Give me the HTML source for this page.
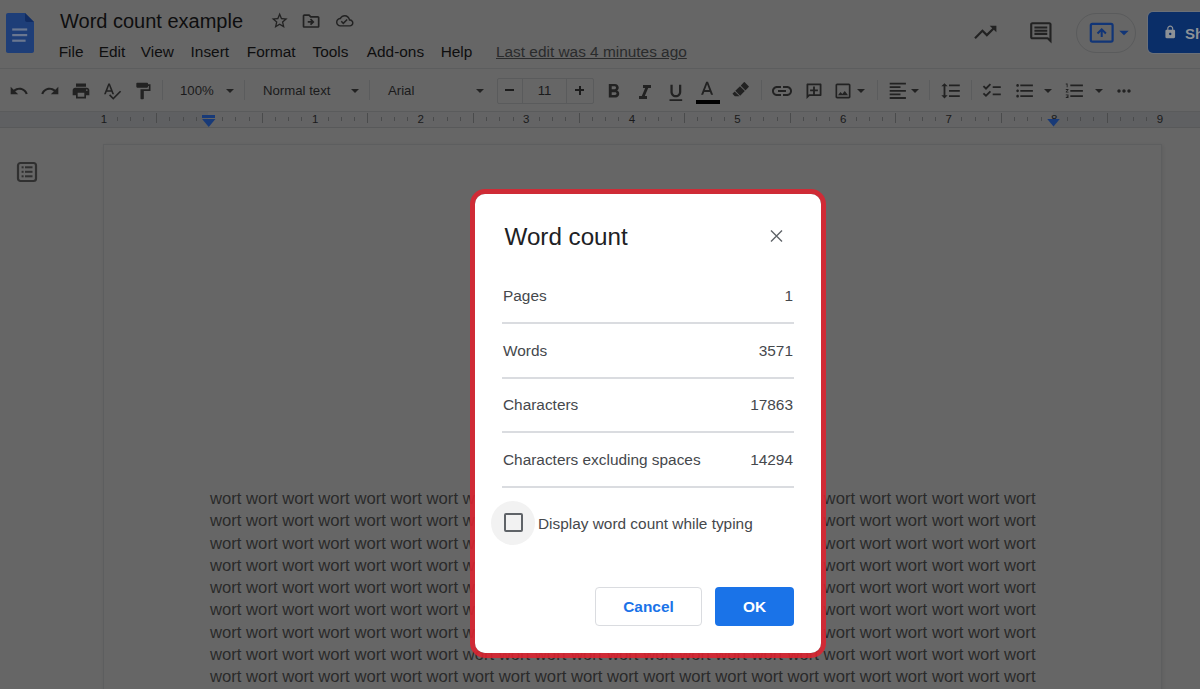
<!DOCTYPE html>
<html><head><meta charset="utf-8">
<style>
*{margin:0;padding:0;box-sizing:border-box}
html,body{width:1200px;height:689px;overflow:hidden;background:#666;font-family:"Liberation Sans",sans-serif;position:relative}
.a{position:absolute}
svg.a{overflow:visible}
#hline{left:0;top:68px;width:1200px;height:1px;background:#5c5d5e}
#ruler{left:0;top:110.5px;width:1200px;height:17.5px;background:#5f6062;border-top:1px solid #5a5b5c;border-bottom:1px solid #58595a}
#rulerw{left:208px;top:111.5px;width:845px;height:15px;background:#646465}
#page{left:104px;top:145px;width:1057px;height:600px;background:#666;box-shadow:0 0 0 1px #5d5e5f,1px 1px 3px 1px rgba(0,0,0,.08)}
.title{left:60px;top:10px;font-size:20px;color:#0e0e0f;white-space:nowrap}
.menu{top:43px;font-size:15.4px;color:#0e0e0f;white-space:nowrap}
.tb{top:82.5px;font-size:13.2px;color:#1a1a1b;white-space:nowrap}
.sep{top:80px;width:1px;height:20px;background:#5b5c5d}
.ic path{fill:#222}
.rn{top:112px;width:20px;text-align:center;font-size:11.5px;line-height:14px;color:#1a1a1b;white-space:nowrap}
.rt{width:1px;background:#4a4b4c}
#dlgborder{left:470px;top:189px;width:356px;height:469px;border:5px solid rgba(222,35,48,.88);border-radius:15px}
#dlg{left:475px;top:194px;width:346px;height:459px;background:#fff;border-radius:10px}
.dt{font-size:15.4px;color:#45484c;white-space:nowrap}
.dv{left:502px;width:292px;height:2px;background:#dadce0}
</style></head><body>
<div id="hline" class="a"></div>
<div id="ruler" class="a"></div>
<div id="rulerw" class="a"></div>
<div id="page" class="a"></div>

<!-- doc icon -->
<svg class="a" style="left:6px;top:13px" width="28" height="40" viewBox="0 0 28 40">
<path d="M2 0h17l9 9v29c0 1.1-.9 2-2 2H2c-1.1 0-2-.9-2-2V2C0 .9.9 0 2 0z" fill="#1e3e78"/>
<path d="M19 0l9 9h-7c-1.1 0-2-.9-2-2z" fill="#112c62"/>
<rect x="6.2" y="15.4" width="15" height="2.2" fill="#6a7790"/>
<rect x="6.2" y="21" width="15" height="2.2" fill="#6a7790"/>
<rect x="6.2" y="26.6" width="13.4" height="2.2" fill="#6a7790"/>
</svg>

<div class="a title">Word count example</div>
<svg class="a ic" style="left:270px;top:11.2px" width="19.3" height="19.3" viewBox="0 0 24 24"><path d="M22 9.24l-7.19-.62L12 2 9.19 8.63 2 9.24l5.46 4.73L5.82 21 12 17.27 18.18 21l-1.63-7.03L22 9.24zM12 15.4l-3.76 2.27 1-4.28-3.32-2.88 4.38-.38L12 6.1l1.71 4.04 4.38.38-3.32 2.88 1 4.28L12 15.4z"/></svg>
<svg class="a ic" style="left:301.3px;top:10.8px" width="20.2" height="20.2" viewBox="0 0 24 24"><path d="M20 6h-8l-2-2H4c-1.1 0-1.99.9-1.99 2L2 18c0 1.1.9 2 2 2h16c1.1 0 2-.9 2-2V8c0-1.1-.9-2-2-2zm0 12H4V6h5.17l2 2H20v10zm-7.84-6H8v2h4.16l-1.59 1.59L11.99 17 16 13.01 11.99 9l-1.41 1.41L12.160 12z"/></svg>
<svg class="a ic" style="left:336.3px;top:12.3px" width="17.5" height="17.5" viewBox="0 0 24 24"><path d="M19.35 10.04C18.67 6.590 15.64 4 12 4 9.11 4 6.6 5.64 5.35 8.04 2.34 8.36 0 10.91 0 14c0 3.31 2.69 6 6 6h13c2.76 0 5-2.24 5-5 0-2.64-2.05-4.78-4.65-4.96zM19 18H6c-2.21 0-4-1.79-4-4 0-2.05 1.53-3.76 3.56-3.97l1.07-.11.5-.95C8.08 7.14 9.94 6 12 6c2.62 0 4.88 1.86 5.39 4.43l.3 1.5 1.53.11c1.56.1 2.78 1.41 2.78 2.96 0 1.65-1.35 3-3 3zm-9-3.82l-2.09-2.09L6.5 13.5 10 17l6.01-6.010-1.41-1.41z"/></svg>

<div class="a menu" style="left:58.7px">File</div>
<div class="a menu" style="left:98.7px">Edit</div>
<div class="a menu" style="left:140.8px">View</div>
<div class="a menu" style="left:190.6px">Insert</div>
<div class="a menu" style="left:246.8px">Format</div>
<div class="a menu" style="left:312.5px">Tools</div>
<div class="a menu" style="left:366.8px">Add-ons</div>
<div class="a menu" style="left:440.7px">Help</div>
<div class="a menu" style="left:496px;color:#2a2b2c;text-decoration:underline">Last edit was 4 minutes ago</div>

<!-- header right -->
<svg class="a ic" style="left:971.5px;top:19.3px" width="26.6" height="26.6" viewBox="0 0 24 24"><path d="M16 6l2.29 2.29-4.88 4.88-4-4L2 16.59 3.41 18l6-6 4 4 6.3-6.29L22 12V6z"/></svg>
<svg class="a ic" style="left:1027.8px;top:20px" width="25.7" height="25.7" viewBox="0 0 24 24"><path d="M21.99 4c0-1.1-.89-2-1.99-2H4c-1.1 0-2 .9-2 2v12c0 1.1.9 2 2 2h14l4 4-.01-18zM20 4v13.17L18.83 16H4V4h16zM6 12h12v2H6zm0-3h12v2H6zm0-3h12v2H6z"/></svg>
<div class="a" style="left:1076px;top:13px;width:60px;height:40px;border:1px solid #5a5b5c;border-radius:20px"></div>
<svg class="a" style="left:1089px;top:22px" width="26" height="22" viewBox="0 0 26 22"><rect x="1.8" y="1.9" width="21.8" height="17.7" rx="1.6" fill="none" stroke="#113577" stroke-width="2.2"/><path d="M8.5 11.5l4.2-4.2 4.2 4.2M12.7 7.6v7.5" fill="none" stroke="#113577" stroke-width="2"/></svg>
<svg class="a" style="left:1116.5px;top:26px" width="14" height="14" viewBox="0 0 24 24"><path fill="#113577" d="M4 8l8 8 8-8z"/></svg>
<div class="a" style="left:1148px;top:12px;width:60px;height:41px;border-radius:5px;background:#0a2e68;box-shadow:0 0 0 1px #6b7078"></div>
<svg class="a" style="left:1162.9px;top:25.4px" width="14.5" height="14.5" viewBox="0 0 24 24"><path fill="#8d9196" d="M18 8h-1V6c0-2.76-2.24-5-5-5S7 3.24 7 6v2H6c-1.1 0-2 .9-2 2v10c0 1.1.9 2 2 2h12c1.1 0 2-.9 2-2V10c0-1.1-.9-2-2-2zm-6 9c-1.1 0-2-.9-2-2s.9-2 2-2 2 .9 2 2-.9 2-2 2zm3.1-9H8.9V6c0-1.71 1.39-3.1 3.1-3.1 1.710 0 3.1 1.39 3.1 3.1v2z"/></svg>
<div class="a" style="left:1185px;top:24.5px;font-size:15px;font-weight:bold;color:#8d9196">Share</div>

<!-- toolbar -->
<svg class="a ic" style="left:9px;top:81px" width="20" height="20" viewBox="0 0 24 24"><path d="M12.5 8c-2.65 0-5.05.99-6.9 2.6L2 7v9h9l-3.62-3.62c1.39-1.16 3.16-1.88 5.12-1.88 3.54 0 6.55 2.31 7.6 5.5l2.37-.78C21.08 11.03 17.15 8 12.5 8z"/></svg>
<svg class="a ic" style="left:40px;top:81px" width="20" height="20" viewBox="0 0 24 24"><path d="M18.4 10.6C16.55 8.99 14.15 8 11.5 8c-4.65 0-8.58 3.03-9.96 7.22L3.9 16c1.05-3.19 4.05-5.5 7.6-5.5 1.95 0 3.73.72 5.12 1.88L13 16h9V7l-3.6 3.6z"/></svg>
<svg class="a ic" style="left:71px;top:81px" width="20" height="20" viewBox="0 0 24 24"><path d="M19 8H5c-1.66 0-3 1.34-3 3v6h4v4h12v-4h4v-6c0-1.66-1.34-3-3-3zm-3 11H8v-5h8v5zm3-7c-.55 0-1-.45-1-1s.45-1 1-1 1 .45 1 1-.45 1-1 1zm-1-9H6v4h12V3z"/></svg>
<svg class="a ic" style="left:102px;top:81px" width="20" height="20" viewBox="0 0 24 24"><path d="M12.45 16h2.09L9.43 3H7.57L2.46 16h2.09l1.12-3h5.64l1.14 3zm-6.02-5L8.5 5.48 10.57 11H6.43zm15.16.59l-8.09 8.09L9.83 16l-1.41 1.41 5.090 5.09L23 13l-1.41-1.41z"/></svg>
<svg class="a ic" style="left:133px;top:81px" width="20" height="20" viewBox="0 0 24 24"><path d="M18 4V3c0-.55-.45-1-1-1H5c-.55 0-1 .45-1 1v4c0 .55.45 1 1 1h12c.55 0 1-.45 1-1V6h1v4H9v11c0 .55.45 1 1 1h2c.55 0 1-.45 1-1v-9h8V4h-3z"/></svg>
<div class="a sep" style="left:162px"></div>
<div class="a tb" style="left:180px">100%</div>
<svg class="a ic" style="left:224px;top:85px" width="12" height="12" viewBox="0 0 24 24"><path d="M4 8l8 8 8-8z"/></svg>
<div class="a sep" style="left:244px"></div>
<div class="a tb" style="left:263px">Normal text</div>
<svg class="a ic" style="left:349px;top:85px" width="12" height="12" viewBox="0 0 24 24"><path d="M4 8l8 8 8-8z"/></svg>
<div class="a sep" style="left:369px"></div>
<div class="a tb" style="left:388px">Arial</div>
<svg class="a ic" style="left:474px;top:85px" width="12" height="12" viewBox="0 0 24 24"><path d="M4 8l8 8 8-8z"/></svg>
<div class="a" style="left:497px;top:78px;width:97px;height:26px;border:1px solid #5a5b5c;border-radius:2px"></div>
<div class="a" style="left:522px;top:78px;width:1px;height:26px;background:#5a5b5c"></div>
<div class="a" style="left:566px;top:78px;width:1px;height:26px;background:#5a5b5c"></div>
<div class="a" style="left:505px;top:89px;width:9px;height:2px;background:#1c1c1c"></div>
<div class="a tb" style="left:523px;width:43px;text-align:center">11</div>
<div class="a" style="left:575px;top:89px;width:9px;height:2px;background:#1c1c1c"></div>
<div class="a" style="left:578.5px;top:85.5px;width:2px;height:9px;background:#1c1c1c"></div>
<svg class="a ic" style="left:601.7px;top:80.3px" width="23.3" height="23.3" viewBox="0 0 24 24"><path d="M15.6 10.79c.97-.67 1.65-1.77 1.65-2.79 0-2.26-1.75-4-4-4H7v14h7.04c2.09 0 3.71-1.7 3.71-3.79 0-1.52-.86-2.82-2.15-3.42zM10 6.5h3c.83 0 1.5.67 1.5 1.5s-.67 1.5-1.5 1.5h-3v-3zm3.5 9H10v-3h3.5c.83 0 1.5.67 1.5 1.5s-.67 1.5-1.5 1.5z"/></svg>
<svg class="a ic" style="left:633px;top:80.8px" width="24" height="24" viewBox="0 0 24 24"><path d="M10 4v3h2.21l-3.42 8H6v3h8v-3h-2.21l3.42-8H18V4z"/></svg>
<svg class="a ic" style="left:665px;top:81.5px" width="21.7" height="21.7" viewBox="0 0 24 24"><path d="M12 17c3.31 0 6-2.69 6-6V3h-2.5v8c0 1.93-1.57 3.5-3.5 3.5S8.5 12.93 8.5 11V3H6v8c0 3.31 2.69 6 6 6zm-7 2v2h14v-2H5z"/></svg>
<svg class="a ic" style="left:696.1px;top:79.2px" width="22.2" height="22.2" viewBox="0 0 24 24"><path d="M11 3L5.5 17h2.25l1.12-3h6.25l1.12 3h2.25L13 3h-2zm-1.38 9L12 5.670 14.38 12H9.62z"/></svg>
<div class="a" style="left:696px;top:100px;width:24px;height:4px;background:#000"></div>
<svg class="a" style="left:730px;top:80.5px" width="20" height="20" viewBox="0 0 20 20"><g transform="rotate(45 10 10)" fill="#222"><rect x="6.6" y="0.5" width="6.8" height="5.2" rx="0.6"/><rect x="6.6" y="6.6" width="6.8" height="6.6"/><path d="M6.6 14.1h6.8l-3.4 3.2h-3.4z"/></g></svg>
<div class="a sep" style="left:761px"></div>
<svg class="a ic" style="left:770px;top:78.5px" width="24" height="24" viewBox="0 0 24 24"><path d="M3.9 12c0-1.71 1.39-3.1 3.1-3.1h4V7H7c-2.76 0-5 2.24-5 5s2.24 5 5 5h4v-1.9H7c-1.71 0-3.1-1.39-3.1-3.1zM8 13h8v-2H8v2zm9-6h-4v1.9h4c1.71 0 3.1 1.39 3.1 3.1s-1.39 3.1-3.1 3.1h-4V17h4c2.76 0 5-2.24 5-5s-2.24-5-5-5z"/></svg>
<svg class="a" style="left:804.5px;top:82px" width="18" height="18" viewBox="0 0 18 18"><path fill="#222" d="M2.6 1.5h12.8c.6 0 1.1.5 1.1 1.1v10.3c0 .6-.5 1.1-1.1 1.1H4.6L1.5 17V2.6c0-.6.5-1.1 1.1-1.1zM3.3 3.3v9.6l.6-.7h10.8V3.3zM8.1 4.4h1.8v3h3v1.8h-3v3H8.1v-3h-3V7.4h3z"/></svg>
<svg class="a ic" style="left:833px;top:81px" width="20" height="20" viewBox="0 0 24 24"><path d="M19 5v14H5V5h14m0-2H5c-1.1 0-2 .9-2 2v14c0 1.1.9 2 2 2h14c1.1 0 2-.9 2-2V5c0-1.1-.9-2-2-2zm-4.86 8.86l-3 3.87L9 13.14 6 17h12l-3.86-5.14z"/></svg>
<svg class="a ic" style="left:855px;top:85px" width="12" height="12" viewBox="0 0 24 24"><path d="M4 8l8 8 8-8z"/></svg>
<div class="a sep" style="left:877px"></div>
<svg class="a ic" style="left:887.2px;top:80.2px" width="21.6" height="21.6" viewBox="0 0 24 24"><path d="M15 15H3v2h12v-2zm0-8H3v2h12V7zM3 13h18v-2H3v2zm0 8h18v-2H3v2zM3 3v2h18V3H3z"/></svg>
<svg class="a ic" style="left:908.5px;top:85px" width="12" height="12" viewBox="0 0 24 24"><path d="M4 8l8 8 8-8z"/></svg>
<div class="a sep" style="left:929px"></div>
<svg class="a ic" style="left:940.2px;top:80.2px" width="21.6" height="21.6" viewBox="0 0 24 24"><path d="M6 7h2.5L5 3.5 1.5 7H4v10H1.5L5 20.5 8.5 17H6V7zm4-2v2h12V5H10zm0 14h12v-2H10v2zm0-6h12v-2H10v2z"/></svg>
<div class="a sep" style="left:971px"></div>
<svg class="a ic" style="left:981.2px;top:80.2px" width="21.6" height="21.6" viewBox="0 0 24 24"><path d="M22 7h-9v2h9V7zm0 8h-9v2h9v-2zM5.54 11L2 7.46l1.41-1.41 2.12 2.12 4.24-4.24 1.41 1.41L5.54 11zm0 8L2 15.46l1.41-1.41 2.12 2.12 4.24-4.24 1.41 1.41L5.54 19z"/></svg>
<svg class="a ic" style="left:1014.2px;top:80.2px" width="21.6" height="21.6" viewBox="0 0 24 24"><path d="M4 10.5c-.83 0-1.5.67-1.5 1.5s.67 1.5 1.5 1.5 1.5-.67 1.5-1.5-.67-1.5-1.5-1.5zm0-6c-.83 0-1.5.67-1.5 1.5S3.17 7.5 4 7.5 5.5 6.83 5.5 6 4.83 4.5 4 4.5zm0 12c-.83 0-1.5.68-1.5 1.5s.68 1.5 1.5 1.5 1.5-.68 1.5-1.5-.67-1.5-1.5-1.5zM7 19h14v-2H7v2zm0-6h14v-2H7v2zm0-8v2h14V5H7z"/></svg>
<svg class="a ic" style="left:1042px;top:85px" width="12" height="12" viewBox="0 0 24 24"><path d="M4 8l8 8 8-8z"/></svg>
<svg class="a ic" style="left:1064.2px;top:80.2px" width="21.6" height="21.6" viewBox="0 0 24 24"><path d="M2 17h2v.5H3v1h1v.5H2v1h3v-4H2v1zm1-9h1V4H2v1h1v3zm-1 3h1.8L2 13.1v.9h3v-1H3.2L5 10.9V10H2v1zm5-6v2h14V5H7zm0 14h14v-2H7v2zm0-6h14v-2H7v2z"/></svg>
<svg class="a ic" style="left:1093px;top:85px" width="12" height="12" viewBox="0 0 24 24"><path d="M4 8l8 8 8-8z"/></svg>
<svg class="a ic" style="left:1114px;top:81px" width="20" height="20" viewBox="0 0 24 24"><path d="M6 10c-1.1 0-2 .9-2 2s.9 2 2 2 2-.9 2-2-.9-2-2-2zm12 0c-1.1 0-2 .9-2 2s.9 2 2 2 2-.9 2-2-.9-2-2-2zm-6 0c-1.1 0-2 .9-2 2s.9 2 2 2 2-.9 2-2-.9-2-2-2z"/></svg>

<!-- ruler numbers -->
<div id="rnums">
<div class="a rn" style="left:93.9px">1</div>
<div class="a rt" style="left:116.6px;top:117.2px;height:4px"></div>
<div class="a rt" style="left:129.8px;top:117.2px;height:4px"></div>
<div class="a rt" style="left:143.0px;top:117.2px;height:4px"></div>
<div class="a rt" style="left:156.2px;top:113px;height:10px"></div>
<div class="a rt" style="left:169.4px;top:117.2px;height:4px"></div>
<div class="a rt" style="left:182.6px;top:117.2px;height:4px"></div>
<div class="a rt" style="left:195.8px;top:117.2px;height:4px"></div>
<div class="a rt" style="left:222.2px;top:117.2px;height:4px"></div>
<div class="a rt" style="left:235.4px;top:117.2px;height:4px"></div>
<div class="a rt" style="left:248.6px;top:117.2px;height:4px"></div>
<div class="a rt" style="left:261.8px;top:113px;height:10px"></div>
<div class="a rt" style="left:275.0px;top:117.2px;height:4px"></div>
<div class="a rt" style="left:288.2px;top:117.2px;height:4px"></div>
<div class="a rt" style="left:301.4px;top:117.2px;height:4px"></div>
<div class="a rn" style="left:305.1px">1</div>
<div class="a rt" style="left:327.8px;top:117.2px;height:4px"></div>
<div class="a rt" style="left:341.0px;top:117.2px;height:4px"></div>
<div class="a rt" style="left:354.2px;top:117.2px;height:4px"></div>
<div class="a rt" style="left:367.4px;top:113px;height:10px"></div>
<div class="a rt" style="left:380.6px;top:117.2px;height:4px"></div>
<div class="a rt" style="left:393.8px;top:117.2px;height:4px"></div>
<div class="a rt" style="left:407.0px;top:117.2px;height:4px"></div>
<div class="a rn" style="left:410.7px">2</div>
<div class="a rt" style="left:433.4px;top:117.2px;height:4px"></div>
<div class="a rt" style="left:446.6px;top:117.2px;height:4px"></div>
<div class="a rt" style="left:459.8px;top:117.2px;height:4px"></div>
<div class="a rt" style="left:473.0px;top:113px;height:10px"></div>
<div class="a rt" style="left:486.2px;top:117.2px;height:4px"></div>
<div class="a rt" style="left:499.4px;top:117.2px;height:4px"></div>
<div class="a rt" style="left:512.6px;top:117.2px;height:4px"></div>
<div class="a rn" style="left:516.3px">3</div>
<div class="a rt" style="left:539.0px;top:117.2px;height:4px"></div>
<div class="a rt" style="left:552.2px;top:117.2px;height:4px"></div>
<div class="a rt" style="left:565.4px;top:117.2px;height:4px"></div>
<div class="a rt" style="left:578.6px;top:113px;height:10px"></div>
<div class="a rt" style="left:591.8px;top:117.2px;height:4px"></div>
<div class="a rt" style="left:605.0px;top:117.2px;height:4px"></div>
<div class="a rt" style="left:618.2px;top:117.2px;height:4px"></div>
<div class="a rn" style="left:621.9px">4</div>
<div class="a rt" style="left:644.6px;top:117.2px;height:4px"></div>
<div class="a rt" style="left:657.8px;top:117.2px;height:4px"></div>
<div class="a rt" style="left:671.0px;top:117.2px;height:4px"></div>
<div class="a rt" style="left:684.2px;top:113px;height:10px"></div>
<div class="a rt" style="left:697.4px;top:117.2px;height:4px"></div>
<div class="a rt" style="left:710.6px;top:117.2px;height:4px"></div>
<div class="a rt" style="left:723.8px;top:117.2px;height:4px"></div>
<div class="a rn" style="left:727.5px">5</div>
<div class="a rt" style="left:750.2px;top:117.2px;height:4px"></div>
<div class="a rt" style="left:763.4px;top:117.2px;height:4px"></div>
<div class="a rt" style="left:776.6px;top:117.2px;height:4px"></div>
<div class="a rt" style="left:789.8px;top:113px;height:10px"></div>
<div class="a rt" style="left:803.0px;top:117.2px;height:4px"></div>
<div class="a rt" style="left:816.2px;top:117.2px;height:4px"></div>
<div class="a rt" style="left:829.4px;top:117.2px;height:4px"></div>
<div class="a rn" style="left:833.1px">6</div>
<div class="a rt" style="left:855.8px;top:117.2px;height:4px"></div>
<div class="a rt" style="left:869.0px;top:117.2px;height:4px"></div>
<div class="a rt" style="left:882.2px;top:117.2px;height:4px"></div>
<div class="a rt" style="left:895.4px;top:113px;height:10px"></div>
<div class="a rt" style="left:908.6px;top:117.2px;height:4px"></div>
<div class="a rt" style="left:921.8px;top:117.2px;height:4px"></div>
<div class="a rt" style="left:935.0px;top:117.2px;height:4px"></div>
<div class="a rn" style="left:938.7px">7</div>
<div class="a rt" style="left:961.4px;top:117.2px;height:4px"></div>
<div class="a rt" style="left:974.6px;top:117.2px;height:4px"></div>
<div class="a rt" style="left:987.8px;top:117.2px;height:4px"></div>
<div class="a rt" style="left:1001.0px;top:113px;height:10px"></div>
<div class="a rt" style="left:1014.2px;top:117.2px;height:4px"></div>
<div class="a rt" style="left:1027.4px;top:117.2px;height:4px"></div>
<div class="a rt" style="left:1040.6px;top:117.2px;height:4px"></div>
<div class="a rn" style="left:1044.3px">8</div>
<div class="a rt" style="left:1067.0px;top:117.2px;height:4px"></div>
<div class="a rt" style="left:1080.2px;top:117.2px;height:4px"></div>
<div class="a rt" style="left:1093.4px;top:117.2px;height:4px"></div>
<div class="a rt" style="left:1106.6px;top:113px;height:10px"></div>
<div class="a rt" style="left:1119.8px;top:117.2px;height:4px"></div>
<div class="a rt" style="left:1133.0px;top:117.2px;height:4px"></div>
<div class="a rt" style="left:1146.2px;top:117.2px;height:4px"></div>
<div class="a rn" style="left:1149.9px">9</div>
<div class="a" style="left:202px;top:115px;width:13px;height:3px;background:#183a78"></div>
<svg class="a" style="left:201.7px;top:119px" width="13.5" height="8" viewBox="0 0 15 9"><path d="M0 0h15L7.5 9z" fill="#183a78"/></svg>
<svg class="a" style="left:1047px;top:119px" width="13" height="7.5" viewBox="0 0 15 9"><path d="M0 0h15L7.5 9z" fill="#183a78"/></svg>
</div>

<!-- left outline icon -->
<svg class="a" style="left:16px;top:161px" width="22" height="22" viewBox="0 0 22 22">
<rect x="2" y="2" width="18" height="18" rx="2.5" fill="none" stroke="#303030" stroke-width="2.2"/>
<rect x="5.6" y="5.3" width="2" height="2" fill="#303030"/><rect x="9" y="5.3" width="7.5" height="2" fill="#303030"/>
<rect x="5.6" y="9.8" width="2" height="2" fill="#303030"/><rect x="9" y="9.8" width="7.5" height="2" fill="#303030"/>
<rect x="5.6" y="14.3" width="2" height="2" fill="#303030"/><rect x="9" y="14.3" width="7.5" height="2" fill="#303030"/>
</svg>

<div id="text" class="a" style="left:210px;top:488px;font-size:16.66px;line-height:22.25px;color:#2a2a2a;white-space:nowrap">
wort wort wort wort wort wort wort wort wort wort wort wort wort wort wort wort wort wort wort wort wort wort wort<br>
wort wort wort wort wort wort wort wort wort wort wort wort wort wort wort wort wort wort wort wort wort wort wort<br>
wort wort wort wort wort wort wort wort wort wort wort wort wort wort wort wort wort wort wort wort wort wort wort<br>
wort wort wort wort wort wort wort wort wort wort wort wort wort wort wort wort wort wort wort wort wort wort wort<br>
wort wort wort wort wort wort wort wort wort wort wort wort wort wort wort wort wort wort wort wort wort wort wort<br>
wort wort wort wort wort wort wort wort wort wort wort wort wort wort wort wort wort wort wort wort wort wort wort<br>
wort wort wort wort wort wort wort wort wort wort wort wort wort wort wort wort wort wort wort wort wort wort wort<br>
wort wort wort wort wort wort wort wort wort wort wort wort wort wort wort wort wort wort wort wort wort wort wort<br>
wort wort wort wort wort wort wort wort wort wort wort wort wort wort wort wort wort wort wort wort wort wort wort
</div>

<!-- dialog -->
<div id="dlgborder" class="a"></div>
<div id="dlg" class="a"></div>
<div class="a" style="left:504.5px;top:223px;font-size:24.2px;color:#202124;white-space:nowrap">Word count</div>
<svg class="a" style="left:770px;top:229.5px" width="13" height="12" viewBox="0 0 13 12"><path d="M1 0.5L12 11.5M12 0.5L1 11.5" stroke="#5f6368" stroke-width="1.4" fill="none"/></svg>
<div class="a dt" style="left:503px;top:287px">Pages</div>
<div class="a dt" style="right:407px;top:287px">1</div>
<div class="a dv" style="top:322px"></div>
<div class="a dt" style="left:503px;top:342px">Words</div>
<div class="a dt" style="right:407px;top:342px">3571</div>
<div class="a dv" style="top:377px"></div>
<div class="a dt" style="left:503px;top:396px">Characters</div>
<div class="a dt" style="right:407px;top:396px">17863</div>
<div class="a dv" style="top:431px"></div>
<div class="a dt" style="left:503px;top:451px">Characters excluding spaces</div>
<div class="a dt" style="right:407px;top:451px">14294</div>
<div class="a dv" style="top:486px"></div>
<div class="a" style="left:491px;top:501px;width:44px;height:44px;border-radius:50%;background:#f2f2f2"></div>
<div class="a" style="left:503.7px;top:513.3px;width:19px;height:19px;border:2px solid #5f6368;border-radius:2px"></div>
<div class="a dt" style="left:538px;top:515px">Display word count while typing</div>
<div class="a" style="left:595px;top:587px;width:107px;height:39px;border:1px solid #dadce0;border-radius:4px"></div>
<div class="a" style="left:595px;top:598px;width:107px;text-align:center;font-size:15.4px;font-weight:bold;color:#1a73e8">Cancel</div>
<div class="a" style="left:715px;top:587px;width:79px;height:39px;background:#1a73e8;border-radius:4px"></div>
<div class="a" style="left:715px;top:598px;width:79px;text-align:center;font-size:15.4px;font-weight:bold;color:#fff">OK</div>
</body></html>
